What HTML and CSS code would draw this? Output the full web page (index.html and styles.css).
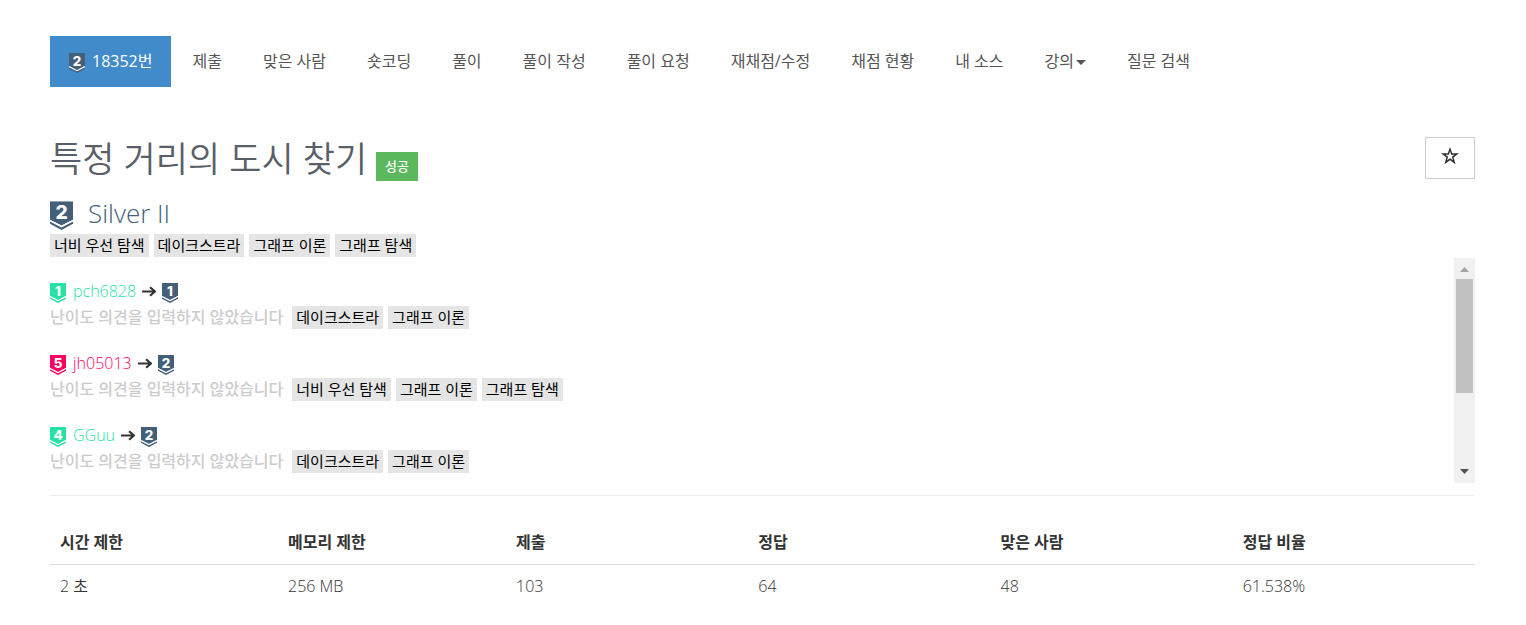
FILE: index.html
```html
<!DOCTYPE html>
<html lang="ko">
<head>
  <meta charset="UTF-8">
  <meta name="viewport" content="width=device-width, initial-scale=1.0">
  <title>18352번: 특정 거리의 도시 찾기</title>
  <link rel="stylesheet" href="styles.css">
</head>
<body>
  <svg class="sprite" width="0" height="0">
    <symbol id="tier" viewBox="0 0 24 30">
      <path fill="currentColor" d="M0 0h24v19.500L12 25.500 0 19.500z"/>
      <path fill="currentColor" d="M0 20.700v3L12 30l12-6.300v-3L12 27z"/>
      <path fill="none" stroke="#fff" stroke-width="1.600" d="M0 20.300l12 6.200 12-6.200"/>
    </symbol>
  </svg>

  <nav>
    <ul class="problem-menu">
      <li class="active"><a href="#"><svg class="tier tier-sm silver" viewBox="0 0 24 30"><use href="#tier"/><text x="12" y="19">2</text></svg>18352번</a></li>
      <li><a href="#">제출</a></li>
      <li><a href="#">맞은 사람</a></li>
      <li><a href="#">숏코딩</a></li>
      <li><a href="#">풀이</a></li>
      <li><a href="#">풀이 작성</a></li>
      <li><a href="#">풀이 요청</a></li>
      <li><a href="#">재채점/수정</a></li>
      <li><a href="#">채점 현황</a></li>
      <li><a href="#">내 소스</a></li>
      <li><a href="#">강의<span class="caret"></span></a></li>
      <li><a href="#">질문 검색</a></li>
    </ul>
  </nav>

  <header class="page-header">
    <h1>특정 거리의 도시 찾기</h1>
    <span class="label-success">성공</span>
    <button class="favorite" type="button" aria-label="즐겨찾기">
      <svg width="18" height="18" viewBox="0 0 18 18"><path fill="#333" fill-rule="evenodd" d="M9 0l2.200 6.300H18l-5.400 4.200 2 6.700L9 13.200l-5.600 4 2-6.700L0 6.300h6.800zM9 4.200L7.900 7.700H4.600l2.500 2-1 3.600L9 11.300l2.900 2-1-3.600 2.500-2h-3.300z"/></svg>
    </button>
  </header>

  <div class="difficulty">
    <svg class="tier tier-lg silver" viewBox="0 0 24 30"><use href="#tier"/><text x="12" y="19">2</text></svg>
    <span>Silver II</span>
  </div>
  <div class="tags">
    <a href="#">너비 우선 탐색</a>
    <a href="#">데이크스트라</a>
    <a href="#">그래프 이론</a>
    <a href="#">그래프 탐색</a>
  </div>

  <section class="opinions">
    <div class="opinion-list">
      <div class="opinion">
        <div class="voter platinum">
          <svg class="tier tier-sm" viewBox="0 0 24 30"><use href="#tier"/><text x="12" y="19">1</text></svg>
          <a href="#">pch6828</a>
          <svg class="arrow" viewBox="0 0 13 10"><path d="M0 5h11M7.500 1L12 5 7.500 9"/></svg>
          <svg class="tier tier-sm silver" viewBox="0 0 24 30"><use href="#tier"/><text x="12" y="19">1</text></svg>
        </div>
        <div class="tags">
          <span class="no-comment">난이도 의견을 입력하지 않았습니다</span>
          <a href="#">데이크스트라</a>
          <a href="#">그래프 이론</a>
        </div>
      </div>
      <div class="opinion">
        <div class="voter ruby">
          <svg class="tier tier-sm" viewBox="0 0 24 30"><use href="#tier"/><text x="12" y="19">5</text></svg>
          <a href="#">jh05013</a>
          <svg class="arrow" viewBox="0 0 13 10"><path d="M0 5h11M7.500 1L12 5 7.500 9"/></svg>
          <svg class="tier tier-sm silver" viewBox="0 0 24 30"><use href="#tier"/><text x="12" y="19">2</text></svg>
        </div>
        <div class="tags">
          <span class="no-comment">난이도 의견을 입력하지 않았습니다</span>
          <a href="#">너비 우선 탐색</a>
          <a href="#">그래프 이론</a>
          <a href="#">그래프 탐색</a>
        </div>
      </div>
      <div class="opinion">
        <div class="voter platinum">
          <svg class="tier tier-sm" viewBox="0 0 24 30"><use href="#tier"/><text x="12" y="19">4</text></svg>
          <a href="#">GGuu</a>
          <svg class="arrow" viewBox="0 0 13 10"><path d="M0 5h11M7.500 1L12 5 7.500 9"/></svg>
          <svg class="tier tier-sm silver" viewBox="0 0 24 30"><use href="#tier"/><text x="12" y="19">2</text></svg>
        </div>
        <div class="tags">
          <span class="no-comment">난이도 의견을 입력하지 않았습니다</span>
          <a href="#">데이크스트라</a>
          <a href="#">그래프 이론</a>
        </div>
      </div>
    </div>
    <div class="scrollbar" aria-hidden="true">
      <svg viewBox="0 0 21 21"><path fill="#a3a3a3" d="M6 14l4.500-5 4.500 5z"/></svg>
      <div class="thumb"></div>
      <svg class="down" viewBox="0 0 21 21"><path fill="#505050" d="M6 7l4.500 5L15 7z"/></svg>
    </div>
  </section>

  <table class="problem-info">
    <thead>
      <tr>
        <th class="limit">시간 제한</th>
        <th class="limit">메모리 제한</th>
        <th>제출</th>
        <th>정답</th>
        <th>맞은 사람</th>
        <th>정답 비율</th>
      </tr>
    </thead>
    <tbody>
      <tr>
        <td>2 초</td>
        <td>256 MB</td>
        <td>103</td>
        <td>64</td>
        <td>48</td>
        <td>61.538%</td>
      </tr>
    </tbody>
  </table>
</body>
</html>
```
FILE: styles.css
```css
* {
  box-sizing: border-box;
}
body {
  margin: 0;
  padding: 36px 51px 0 50px;
  background: #fff;
  color: #333;
  font-family: "Open Sans", "Noto Sans CJK KR", sans-serif;
  font-size: 16px;
  line-height: 24px;
}
a {
  color: inherit;
  text-decoration: none;
}
.sprite {
  position: absolute;
}

/* problem menu */
.problem-menu {
  display: flex;
  flex-wrap: wrap;
  gap: 1px;
  margin: 0;
  padding: 0;
  list-style: none;
}
.problem-menu a {
  display: flex;
  align-items: center;
  height: 51px;
  padding: 0 20px 2px;
  color: #555;
}
.problem-menu .active a {
  padding: 0 19px 2px;
  background: #428bca;
  color: #fff;
}
.problem-menu .tier {
  margin: 4px 7px 0 0;
}
.caret {
  margin: 4px 0 0 2px;
  border-top: 5px solid #555;
  border-left: 5px solid transparent;
  border-right: 5px solid transparent;
}

/* tier badges */
.tier {
  flex: none;
  overflow: visible;
}
.tier text {
  fill: #fff;
  font-family: Inter, sans-serif;
  font-size: 20px;
  font-weight: 800;
  text-anchor: middle;
}
.tier-sm {
  width: 16px;
  height: 20px;
}
.tier-lg {
  width: 23px;
  height: 29px;
}
.silver {
  color: #435f7a;
}
.platinum {
  color: #27e2a4;
}
.ruby {
  color: #ff0062;
}

/* title */
.page-header {
  display: flex;
  align-items: flex-start;
  margin-top: 50px;
}
.page-header h1 {
  margin: 0;
  color: #585f69;
  font-size: 35px;
  font-weight: 350;
  line-height: 44px;
}
.label-success {
  margin: 15px 0 0 9px;
  padding: 0 9px;
  background: #5cb85c;
  color: #fff;
  font-size: 13px;
  font-weight: 500;
  line-height: 29px;
}
.favorite {
  display: flex;
  align-items: center;
  justify-content: center;
  width: 50px;
  height: 42px;
  margin-left: auto;
  padding: 0 0 4px;
  border: 1px solid #ccc;
  background: #fff;
  cursor: pointer;
}
.difficulty {
  display: flex;
  align-items: flex-end;
  gap: 15px;
  margin-top: 15px;
  color: #435f7a;
  font-size: 26px;
  font-weight: 350;
  line-height: 34px;
}
.tags {
  display: flex;
  align-items: center;
  gap: 5px;
}
.tags a {
  padding: 0 4px;
  background: #e5e5e5;
  color: #000;
  font-size: 15px;
  line-height: 23px;
}
.difficulty + .tags {
  margin-top: 4px;
}

/* difficulty opinions */
.opinions {
  display: flex;
  margin-top: 1px;
  padding-bottom: 12px;
  border-bottom: 1px solid #eee;
}
.opinion-list {
  display: flex;
  flex: 1;
  flex-direction: column;
  gap: 20px;
  padding-top: 19px;
}
.voter {
  display: flex;
  align-items: center;
  gap: 6px;
  height: 28px;
  font-weight: 350;
}
.voter .tier {
  margin-top: 3px;
}
.voter a {
  margin-left: 1px;
}
.arrow {
  width: 14px;
  height: 11px;
  fill: none;
  stroke: #333;
  stroke-width: 2;
}
.no-comment {
  margin-right: 4px;
  color: #ccc;
  font-weight: 500;
}
.scrollbar {
  display: flex;
  flex-direction: column;
  width: 21px;
  height: 225px;
  background: #f1f1f1;
}
.scrollbar svg {
  width: 21px;
  height: 21px;
}
.thumb {
  height: 114px;
  margin: 0 2px;
  background: #c1c1c1;
}
.scrollbar .down {
  margin-top: auto;
}

/* limits and statistics */
.problem-info {
  width: 100%;
  margin-top: 24px;
  border-collapse: collapse;
  table-layout: fixed;
}
.problem-info th,
.problem-info td {
  padding: 10px;
  text-align: left;
}
.problem-info th {
  width: 17%;
  border-bottom: 1px solid #ddd;
  font-weight: 700;
}
.problem-info .limit {
  width: 16%;
}
.problem-info td {
  padding-top: 9px;
  font-weight: 350;
}
```
